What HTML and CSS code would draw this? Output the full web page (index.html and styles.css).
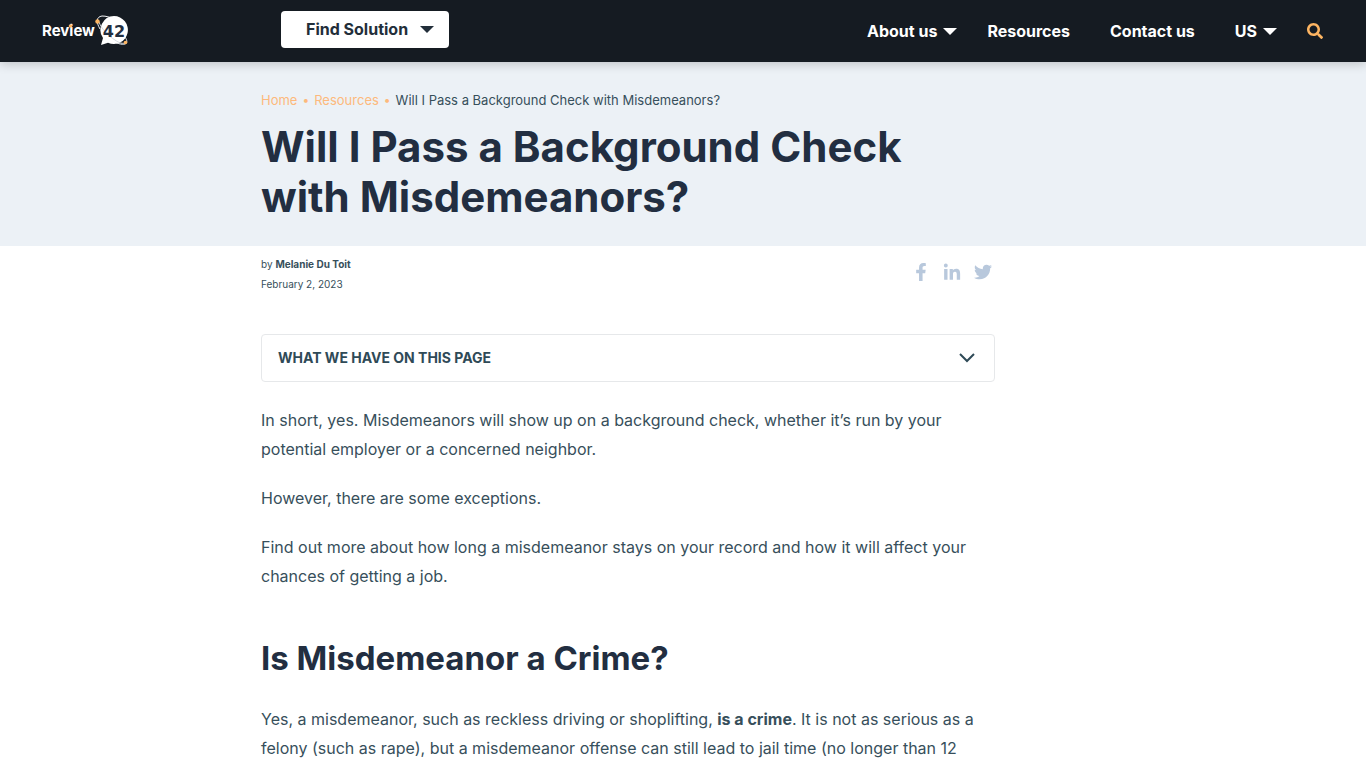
FILE: index.html
```
<!DOCTYPE html>
<html lang="en">
<head>
    <meta charset="UTF-8">
    <meta name="viewport" content="width=device-width, initial-scale=1.0">
    <title>Will I Pass a Background Check with Misdemeanors?</title>
    <link rel="stylesheet" href="styles.css">
</head>
<body>
    <header class="site-header">
        <a class="logo" href="#" aria-label="Review42">
            <svg width="88" height="34" viewBox="0 0 88 34">
                <text class="logo-name" x="0" y="22">Review</text>
                <circle cx="28.500" cy="12" r="1.800" fill="#fdb562"/>
                <path d="M58 15C54 8 54 3 60 2c4 0 8 1 11 3M82 22c3 3 4 7 1 8-3 1-9-1-13-3" fill="none" stroke="#f4f5f7" stroke-width="1"/>
                <path d="M72 2a14 14 0 1 1-6 26.700L59 31l2-7A14 14 0 0 1 72 2z" fill="#fff"/>
                <path d="M57 8c2 6 9 14 16 18 4 3 8 4 11 3" fill="none" stroke="#d5d9df" stroke-width="1"/>
                <circle cx="55.500" cy="7.500" r="2.200" fill="#fdb562"/>
                <circle cx="83.500" cy="28.500" r="1.800" fill="#fdb562"/>
                <text class="logo-number" x="72" y="23" text-anchor="middle">42</text>
            </svg>
        </a>
        <button class="find-btn" type="button">Find Solution <span class="caret"></span></button>
        <nav class="main-nav">
            <a class="has-menu" href="#">About us <span class="caret"></span></a>
            <a href="#">Resources</a>
            <a href="#">Contact us</a>
            <a class="has-menu" href="#">US <span class="caret"></span></a>
            <button class="search-btn" type="button" aria-label="Search">
                <svg width="16" height="16" viewBox="0 0 512 512"><path fill="currentColor" d="M505 442.700L405.300 343c-4.500-4.500-10.600-7-17-7H372c27.600-35.300 44-79.700 44-128C416 93.100 322.900 0 208 0S0 93.100 0 208s93.100 208 208 208c48.300 0 92.700-16.400 128-44v16.300c0 6.400 2.500 12.500 7 17l99.700 99.700c9.400 9.400 24.600 9.400 33.900 0l28.300-28.300c9.400-9.400 9.400-24.600.1-34zM208 336c-70.700 0-128-57.200-128-128 0-70.700 57.200-128 128-128 70.700 0 128 57.200 128 128 0 70.700-57.200 128-128 128z"/></svg>
            </button>
        </nav>
    </header>

    <section class="hero">
        <div class="container">
            <nav class="breadcrumbs" aria-label="Breadcrumb">
                <a href="#">Home</a>
                <span class="dot">•</span>
                <a href="#">Resources</a>
                <span class="dot">•</span>
                <span>Will I Pass a Background Check with Misdemeanors?</span>
            </nav>
            <h1>Will I Pass a Background Check with Misdemeanors?</h1>
        </div>
    </section>

    <main class="container">
        <article class="article">
            <div class="meta">
                <div class="byline">
                    <p>by <a href="#">Melanie Du Toit</a></p>
                    <p>February 2, 2023</p>
                </div>
                <div class="share">
                    <a href="#" aria-label="Facebook">
                        <svg width="18" height="18" viewBox="-96 0 512 512"><path fill="currentColor" d="M279.140 288l14.220-92.660h-88.910v-60.130c0-25.350 12.420-50.060 52.240-50.060h40.420V6.260S260.430 0 225.360 0c-73.220 0-121.080 44.380-121.080 124.720v70.620H22.890V288h81.390v224h100.170V288z"/></svg>
                    </a>
                    <a href="#" aria-label="LinkedIn">
                        <svg width="18" height="18" viewBox="-24 -16 496 496"><path fill="currentColor" d="M100.280 448H7.400V148.900h92.880zM53.790 108.100C24.090 108.100 0 83.500 0 53.800a53.790 53.790 0 0 1 107.580 0c0 29.700-24.100 54.300-53.790 54.300zM447.900 448h-92.680V302.400c0-34.700-.7-79.200-48.290-79.200-48.290 0-55.690 37.700-55.690 76.700V448h-92.780V148.900h89.080v40.800h1.300c12.400-23.500 42.690-48.300 87.880-48.300 94 0 111.280 61.900 111.280 142.300V448z"/></svg>
                    </a>
                    <a href="#" aria-label="Twitter">
                        <svg width="18" height="18" viewBox="0 0 512 512"><path fill="currentColor" d="M459.370 151.716c.325 4.548.325 9.097.325 13.645 0 138.720-105.583 298.558-298.558 298.558-59.452 0-114.680-17.219-161.137-47.106 8.447.974 16.568 1.299 25.340 1.299 49.055 0 94.213-16.568 130.274-44.832-46.132-.975-84.792-31.188-98.112-72.772 6.498.974 12.995 1.624 19.818 1.624 9.421 0 18.843-1.300 27.614-3.573-48.081-9.747-84.143-51.980-84.143-102.985v-1.299c13.969 7.797 30.214 12.670 47.431 13.319-28.264-18.843-46.781-51.005-46.781-87.391 0-19.492 5.197-37.360 14.294-52.954 51.655 63.675 129.300 105.258 216.365 109.807-1.624-7.797-2.599-15.918-2.599-24.040 0-57.828 46.782-104.934 104.934-104.934 30.213 0 57.502 12.670 76.670 33.137 23.715-4.548 46.456-13.320 66.599-25.340-7.798 24.366-24.366 44.833-46.132 57.827 21.117-2.273 41.584-8.122 60.426-16.243-14.292 20.791-32.161 39.308-52.628 54.253z"/></svg>
                    </a>
                </div>
            </div>

            <button class="toc" type="button" aria-expanded="false">
                What we have on this page
                <svg width="18" height="10" viewBox="0 0 18 10"><path d="M2 1l7 7 7-7" fill="none" stroke="currentColor" stroke-width="2"/></svg>
            </button>

            <p>In short, yes. Misdemeanors will show up on a background check, whether it’s run by your potential employer or a concerned neighbor.</p>
            <p>However, there are some exceptions.</p>
            <p>Find out more about how long a misdemeanor stays on your record and how it will affect your chances of getting a job.</p>

            <h2>Is Misdemeanor a Crime?</h2>
            <p>Yes, a misdemeanor, such as reckless driving or shoplifting, <strong>is a crime</strong>. It is not as serious as a felony (such as rape), but a misdemeanor offense can still lead to jail time (no longer than 12</p>
        </article>
    </main>
</body>
</html>
```
FILE: styles.css
```
* {
    box-sizing: border-box;
}
body {
    margin: 0;
    font-family: Inter, "Liberation Sans", sans-serif;
    font-size: 16px;
    line-height: 29px;
    color: #374f5b;
    background: #fff;
}
a {
    color: inherit;
    text-decoration: none;
}
button {
    font-family: inherit;
    cursor: pointer;
}
.site-header {
    position: relative;
    display: flex;
    align-items: center;
    height: 62px;
    padding: 0 43px 0 42px;
    background: #151b22;
    box-shadow: 0 2px 10px rgba(0, 0, 0, 0.2);
}
.logo {
    display: flex;
}
.logo-name {
    font-size: 15px;
    font-weight: 700;
    fill: #fff;
}
.logo-number {
    font-family: "DejaVu Sans", sans-serif;
    font-size: 16px;
    font-weight: 700;
    fill: #222e3f;
}
.caret {
    border: 7px solid transparent;
    border-top-color: currentColor;
    border-bottom: 0;
}
.find-btn {
    display: flex;
    align-items: center;
    justify-content: space-between;
    width: 168px;
    height: 37px;
    margin: 0 0 4px 151px;
    padding: 0 15px 0 25px;
    border: 0;
    border-radius: 4px;
    background: #fff;
    color: #222e3a;
    font-size: 16px;
    font-weight: 700;
}
.main-nav {
    display: flex;
    align-items: center;
    margin-left: auto;
    color: #fff;
    font-weight: 700;
}
.main-nav a {
    padding: 0 20px;
}
.main-nav .has-menu {
    display: flex;
    align-items: center;
    gap: 6px;
    padding-right: 10px;
}
.search-btn {
    display: flex;
    margin-left: 20px;
    padding: 0;
    border: 0;
    background: none;
    color: #fdb562;
}
.container {
    max-width: 844px;
    margin: 0 auto;
}
.hero {
    padding: 28px 0 24px;
    background: #ecf1f6;
}
.breadcrumbs {
    display: flex;
    gap: 5px;
    font-size: 13px;
    line-height: 20px;
}
.breadcrumbs a,
.dot {
    color: #fdb97c;
}
.dot {
    font-size: 12px;
}
h1, h2 {
    color: #222e41;
    font-weight: 700;
}
h1 {
    max-width: 734px;
    margin: 12px 0 0;
    font-size: 42px;
    line-height: 50px;
}
.article {
    max-width: 734px;
}
.article p {
    margin: 0 0 20px;
}
.article strong {
    font-weight: 700;
}
.meta {
    display: flex;
    justify-content: space-between;
    padding-top: 8px;
}
.article .byline p {
    margin: 0;
    font-size: 10px;
    line-height: 20px;
}
.byline a {
    font-weight: 700;
}
.share {
    display: flex;
    gap: 13px;
    padding: 9px 3px 0 0;
    color: #b8c8dc;
}
.share svg {
    display: block;
}
.toc {
    display: flex;
    align-items: center;
    justify-content: space-between;
    width: 100%;
    height: 48px;
    margin: 40px 0 24px;
    padding: 0 18px 1px 16px;
    border: 1px solid #e6e8ea;
    border-radius: 4px;
    background: #fff;
    color: #2f4a57;
    font-size: 14px;
    font-weight: 700;
    text-transform: uppercase;
}
h2 {
    margin: 46px 0 26px;
    font-size: 33px;
    line-height: 42px;
}
```
